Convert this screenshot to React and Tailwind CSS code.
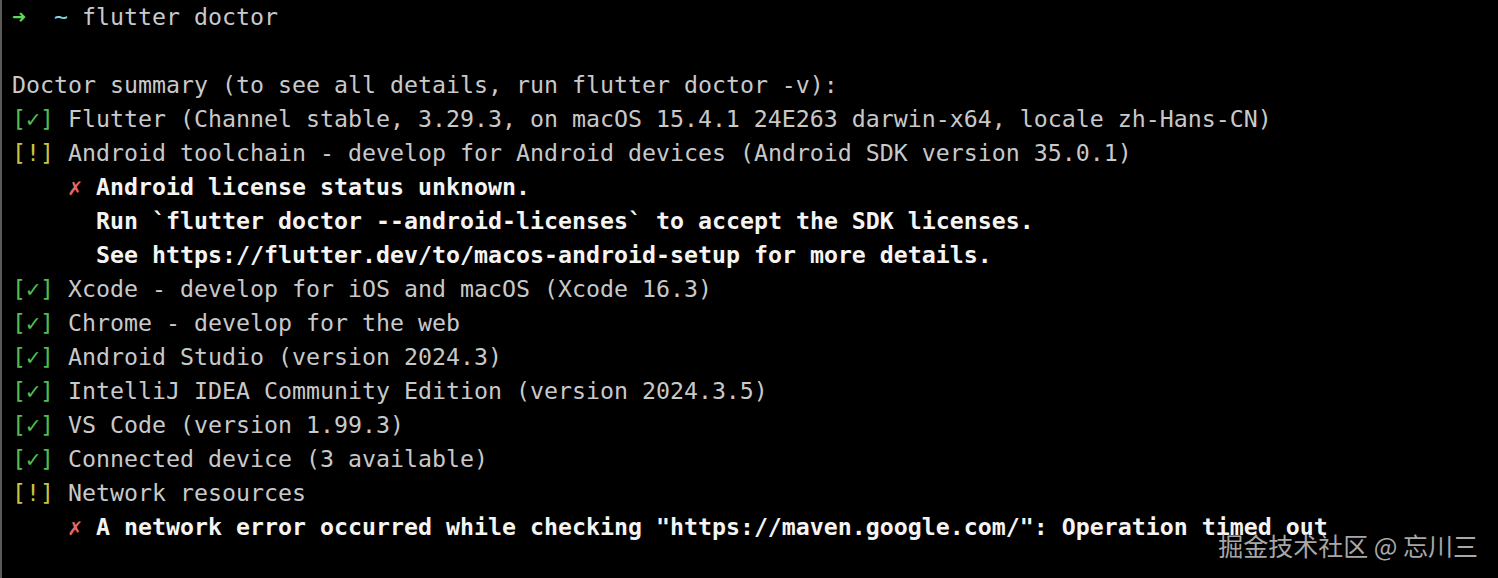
const G = "text-[#4fbf4f]";
const Y = "text-[#c9c53f]";

const Ok = () => (
  <span className={G}>
    [<span className="inline-block w-[1ch] text-center">✓</span>]
  </span>
);

const Warn = () => <span className={Y}>[!]</span>;

const Cross = () => (
  <span className="inline-block w-[1ch] text-center text-[#e46a6a]">✗</span>
);

const Line = ({ children }) => (
  <div className="h-[34px] leading-[34px] whitespace-pre">{children}</div>
);

const Sub = ({ children }) => (
  <span className="font-bold text-[#f4f4f4]">{children}</span>
);

const App = () => {
  return (
    <div
      className="relative w-[1498px] h-[578px] overflow-hidden bg-black border-l-2 border-[#5a5a5a] pl-[10px] text-[23.25px] text-[#c9c9c9]"
      style={{ fontFamily: '"DejaVu Sans Mono", "Liberation Mono", monospace' }}
    >
      <Line>
        <span className="text-[#5fd85f]">➜</span>
        {"  "}
        <span className="text-[#7fd8e2]">~</span> flutter doctor
      </Line>
      <Line>{" "}</Line>
      <Line>Doctor summary (to see all details, run flutter doctor -v):</Line>
      <Line>
        <Ok /> Flutter (Channel stable, 3.29.3, on macOS 15.4.1 24E263 darwin-x64, locale zh-Hans-CN)
      </Line>
      <Line>
        <Warn /> Android toolchain - develop for Android devices (Android SDK version 35.0.1)
      </Line>
      <Line>
        {"    "}
        <Cross /> <Sub>Android license status unknown.</Sub>
      </Line>
      <Line>
        {"      "}
        <Sub>Run `flutter doctor --android-licenses` to accept the SDK licenses.</Sub>
      </Line>
      <Line>
        {"      "}
        <Sub>See https://flutter.dev/to/macos-android-setup for more details.</Sub>
      </Line>
      <Line>
        <Ok /> Xcode - develop for iOS and macOS (Xcode 16.3)
      </Line>
      <Line>
        <Ok /> Chrome - develop for the web
      </Line>
      <Line>
        <Ok /> Android Studio (version 2024.3)
      </Line>
      <Line>
        <Ok /> IntelliJ IDEA Community Edition (version 2024.3.5)
      </Line>
      <Line>
        <Ok /> VS Code (version 1.99.3)
      </Line>
      <Line>
        <Ok /> Connected device (3 available)
      </Line>
      <Line>
        <Warn /> Network resources
      </Line>
      <Line>
        {"    "}
        <Cross />{" "}
        <Sub>A network error occurred while checking "https://maven.google.com/": Operation timed out</Sub>
      </Line>

      {/* watermark */}
      <div
        className="absolute right-[20px] top-[529px] text-[25px] leading-[32px] text-[#a8a8a8] whitespace-pre"
        style={{ fontFamily: '"Noto Sans CJK SC", "Noto Sans", sans-serif' }}
      >
        掘金技术社区 @ 忘川三
      </div>
    </div>
  );
};

export default App;
